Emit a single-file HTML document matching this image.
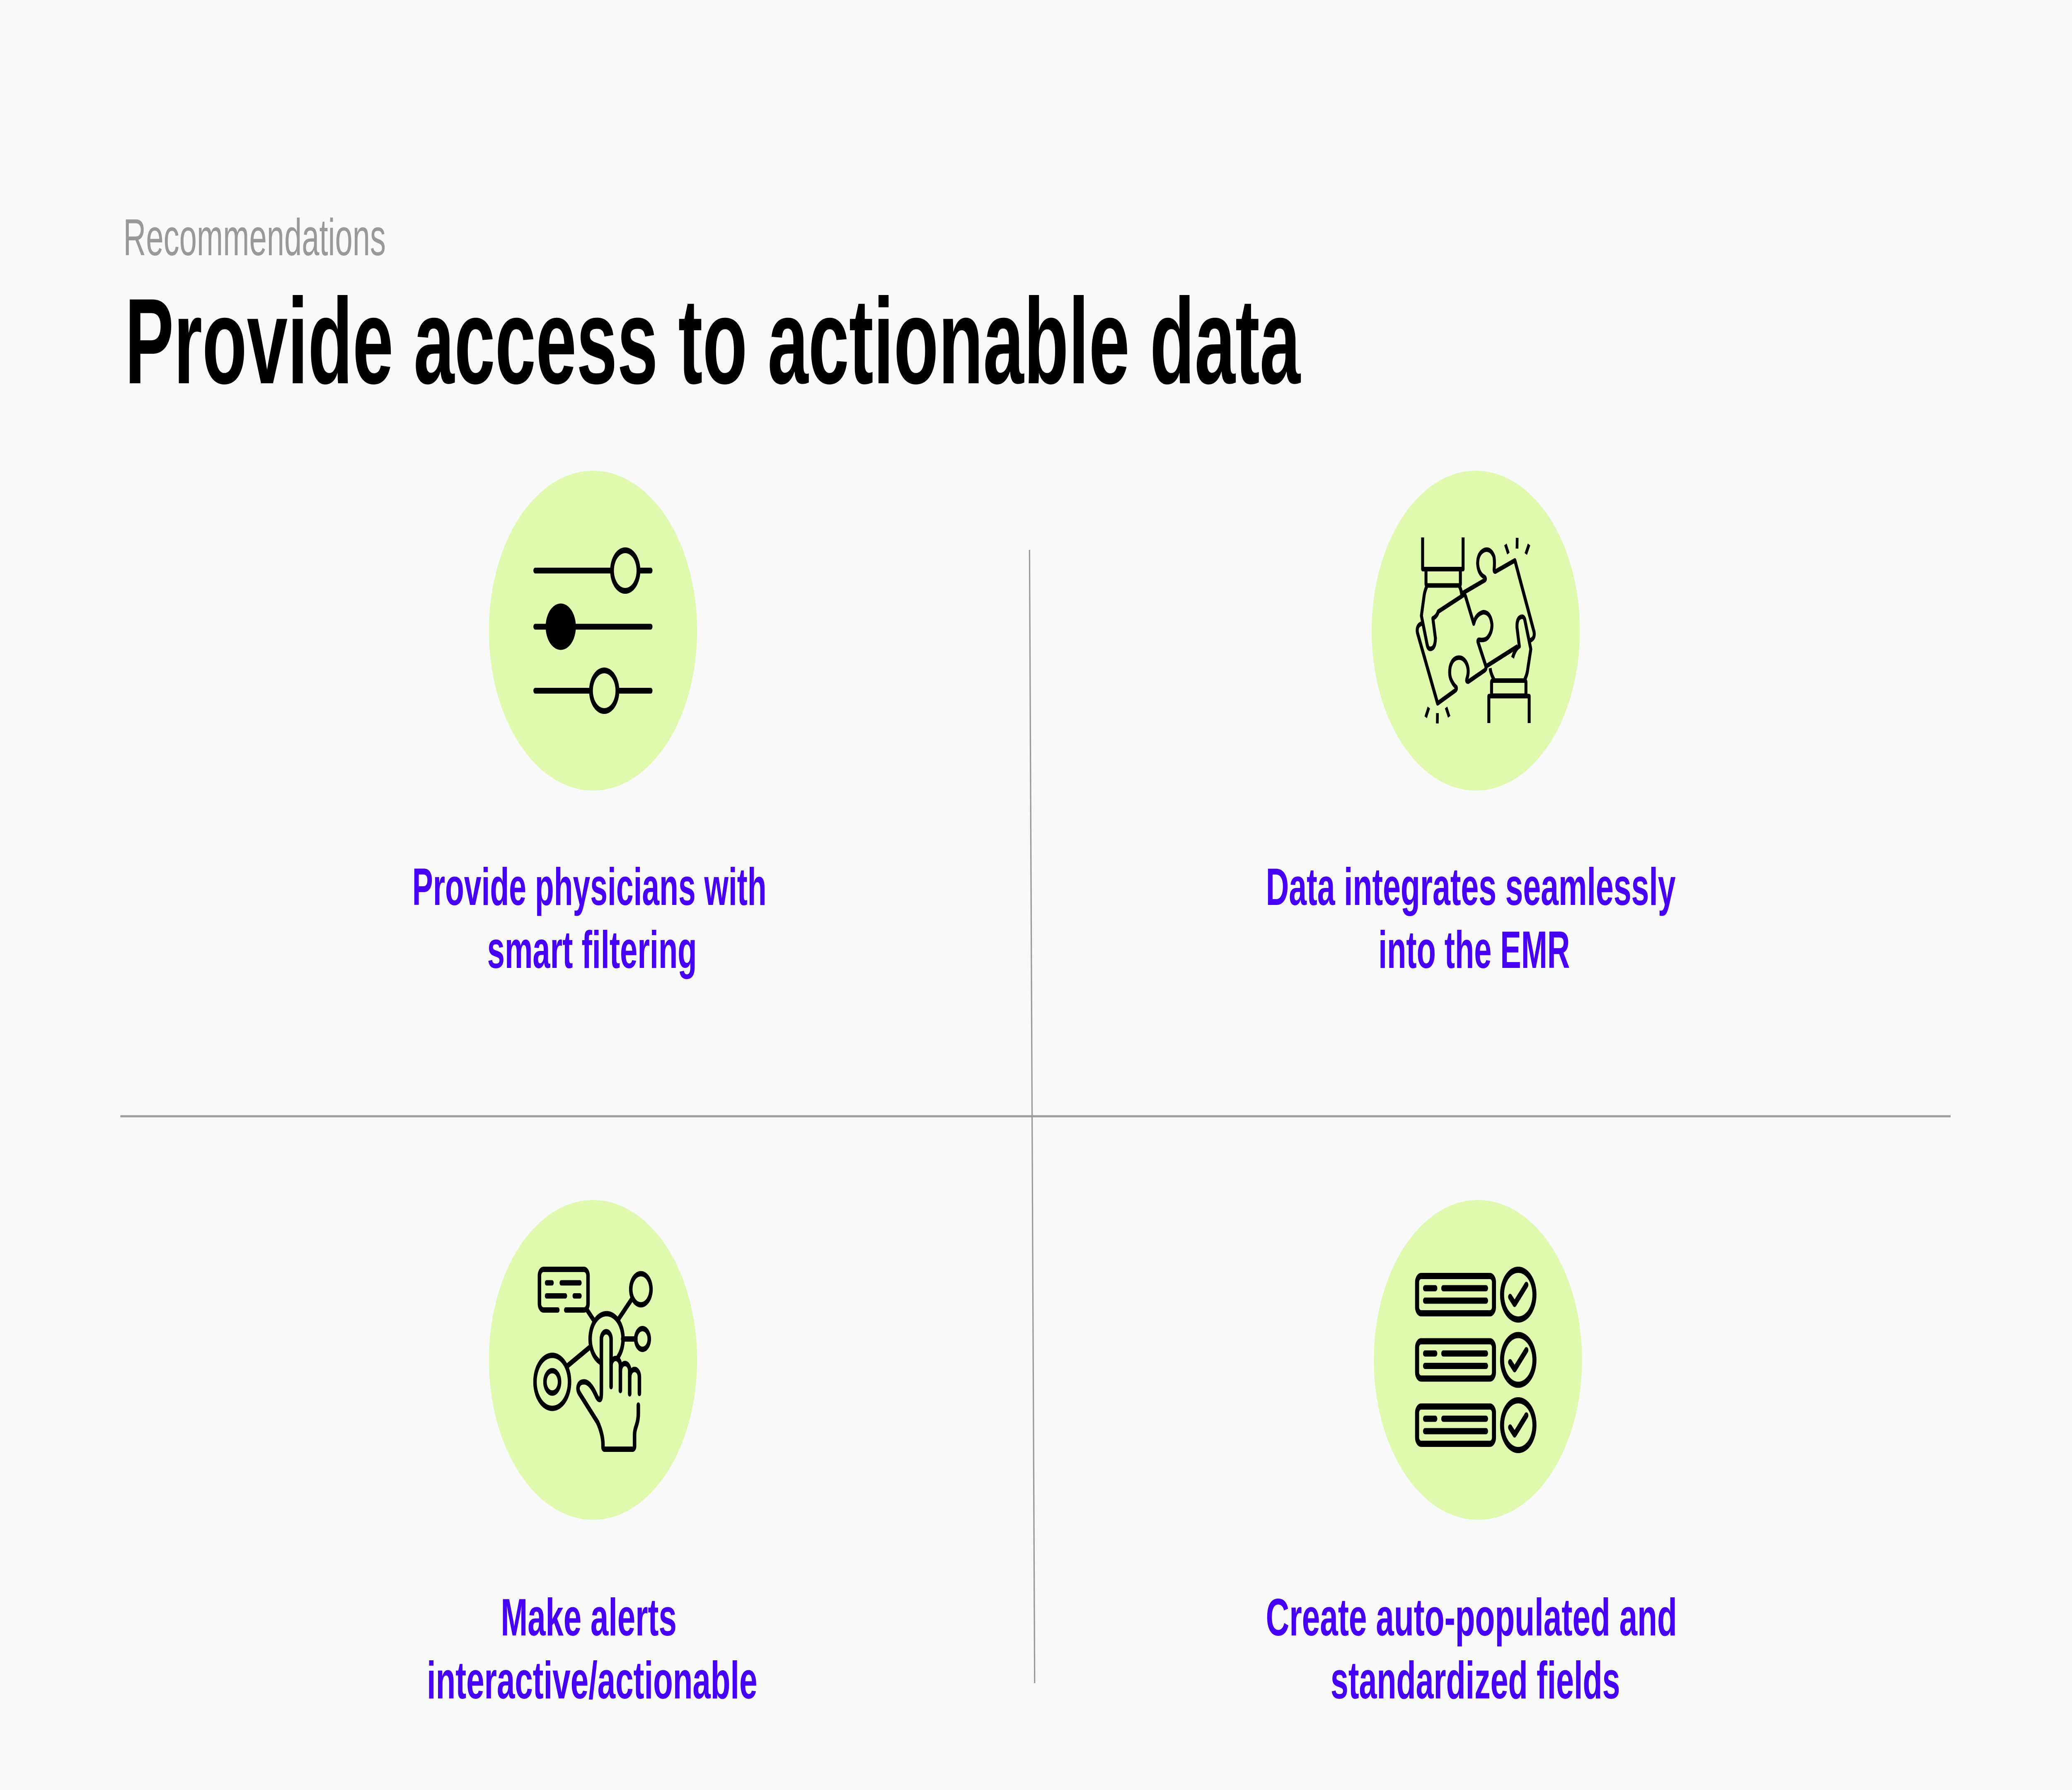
<!DOCTYPE html>
<html><head><meta charset="utf-8">
<style>
html,body{margin:0;padding:0;background:#f9f9f9;width:100%;height:100%;overflow:hidden;}
svg{display:block;width:100vw;height:100vh;}
text{font-family:"Liberation Sans",Arial,sans-serif;}
</style></head>
<body>
<svg viewBox="0 0 7680 4320" preserveAspectRatio="none" xmlns="http://www.w3.org/2000/svg">
<rect width="7680" height="4320" fill="#f9f9f9"/>

<text x="457" y="616" font-size="125" fill="#999999" textLength="973" lengthAdjust="spacingAndGlyphs">Recommendations</text>
<text x="463" y="925" font-size="294" font-weight="bold" fill="#000" textLength="4357" lengthAdjust="spacingAndGlyphs">Provide access to actionable data</text>

<line x1="3816" y1="1327" x2="3835" y2="4062" stroke="#9a9a9a" stroke-width="5"/>
<line x1="446" y1="2694" x2="7230" y2="2694" stroke="#9a9a9a" stroke-width="5"/>

<circle cx="2198" cy="1522" r="386" fill="#dffaae"/>
<circle cx="5470" cy="1522" r="386" fill="#dffaae"/>
<circle cx="2198" cy="3282" r="386" fill="#dffaae"/>
<circle cx="5478" cy="3282" r="386" fill="#dffaae"/>

<g transform="translate(1810,1130) scale(0.5)" fill="none" stroke="#000" stroke-width="28" stroke-linecap="round">
  <line x1="348" y1="494" x2="916" y2="494"/><line x1="1114" y1="494" x2="1203" y2="494"/>
  <circle cx="1015" cy="494" r="98"/>
  <line x1="348" y1="765" x2="1203" y2="765"/>
  <circle cx="537" cy="765" r="112" fill="#000" stroke="none"/>
  <line x1="348" y1="1074" x2="760" y2="1074"/><line x1="958" y1="1074" x2="1203" y2="1074"/>
  <circle cx="859" cy="1074" r="98"/>
</g>

<g transform="translate(5080,1130) scale(0.5)" fill="none" stroke="#000" stroke-width="22" stroke-linejoin="round">
  <path d="M386,334 V487 H686 V334"/>
  <rect x="411" y="487" width="255" height="79" rx="8"/>
  <path d="M420,566 q-15,20 -22,45 L377,712 L421,856 q8,20 30,15 q28,-5 30,-50 L462,725 q30,-10 40,-33 L690,612 q10,-3 15,8 L765,750 q15,-45 70,-55 q55,0 65,60 q0,40 -35,65 q-20,12 -60,8 q-12,0 -8,12 L855,955 q5,15 -12,22 L725,1030 q-18,2 -10,-15 q20,-40 -5,-75 q-25,-30 -65,-25 q-40,5 -55,45 q-10,40 10,65 q15,20 35,32 q5,8 -5,15 L497,1135 L348,795 q-10,-35 30,-45 l-3,-2"/>
  <path d="M655,566 q15,15 20,40 L848,540 q8,-8 -4,-15 q-45,-15 -50,-65 q0,-50 50,-65 q45,-10 70,30 q8,25 2,65 q0,12 12,8 L1070,445 L1212,790 q8,30 -25,40 l-5,2"/>
  <path d="M860,955 L1090,860"/>
  <path d="M915,1020 q-25,-30 -28,-55 M1143,1020 q15,-20 20,-40 L1188,873 L1143,730 q-10,-20 -35,-10 q-25,10 -22,50 L1103,860 q-30,10 -50,55"/>
  <rect x="897" y="1025" width="255" height="73" rx="8"/>
  <path d="M877,1230 V1100 H1176 V1230"/>
  <g stroke-width="20">
  <path d="M1000,368 L1022,412 M1087,336 L1086,388 M1175,368 L1151,414 M432,1155 L409,1202 M496,1182 L495,1232 M560,1155 L583,1200"/>
  </g>
</g>

<g transform="translate(1810,2890) scale(0.5)" fill="none" stroke="#000" stroke-width="26" stroke-linecap="round" stroke-linejoin="round">
  <path d="M515,543 H409 a30,30 0 0 1 -30,-30 V377 a30,30 0 0 1 30,-30 H709 a30,30 0 0 1 30,30 V513 a30,30 0 0 1 -30,30 H574"/>
  <path d="M432,412 H472 M541,412 H679 M432,475 H571 M637,475 H679"/>
  <path d="M732,543 L780,591"/>
  <path d="M834,797 A122,122 0 1 1 962,770"/>
  <path d="M962,590 L1062,492"/>
  <circle cx="1131" cy="443" r="75"/>
  <path d="M996,683 H1094"/>
  <circle cx="1143" cy="683" r="50"/>
  <path d="M754,722 L588,812"/>
  <circle cx="474" cy="890" r="128"/>
  <circle cx="474" cy="890" r="54"/>
  <path d="M910,913 V684 a36,36 0 0 0 -72,0 V940 q0,40 -15,35 q-12,0 -28,-25 q-42,-60 -85,-60 q-40,0 -45,28 q-2,12 8,25 L810,1085 q40,58 40,110 v10 a10,10 0 0 0 10,10 h210 a14,14 0 0 0 14,-14 v-55 q0,-20 12,-42 q16,-30 16,-62 v-40"/>
  <path d="M979,932 V806 a35,35 0 0 0 -69,0"/>
  <path d="M1048,948 V836 a34,34 0 0 0 -69,0"/>
  <path d="M1120,946 V866 a36,36 0 0 0 -72,0"/>
</g>

<g transform="translate(5090,2890) scale(0.5)" fill="none" stroke="#000" stroke-width="30" stroke-linecap="round" stroke-linejoin="round">
  <g>
    <rect x="325" y="379" width="570" height="180" rx="30"/>
    <path d="M384,438 H460 M519,438 H836 M384,498 H836"/>
    <circle cx="1075" cy="469" r="120"/>
    <path d="M1015,480 L1048,514 L1135,422"/>
  </g>
  <g transform="translate(0,315)">
    <rect x="325" y="379" width="570" height="180" rx="30"/>
    <path d="M384,438 H460 M519,438 H836 M384,498 H836"/>
    <circle cx="1075" cy="469" r="120"/>
    <path d="M1015,480 L1048,514 L1135,422"/>
  </g>
  <g transform="translate(0,630)">
    <rect x="325" y="379" width="570" height="180" rx="30"/>
    <path d="M384,438 H460 M519,438 H836 M384,498 H836"/>
    <circle cx="1075" cy="469" r="120"/>
    <path d="M1015,480 L1048,514 L1135,422"/>
  </g>
</g>

<g font-size="127" font-weight="bold" fill="#4600f5">
  <text x="1528" y="2184" textLength="1313" lengthAdjust="spacingAndGlyphs">Provide physicians with</text>
  <text x="1806" y="2336" textLength="777" lengthAdjust="spacingAndGlyphs">smart filtering</text>
  <text x="4692" y="2184" textLength="1519" lengthAdjust="spacingAndGlyphs">Data integrates seamlessly</text>
  <text x="5109" y="2336" textLength="710" lengthAdjust="spacingAndGlyphs">into the EMR</text>
  <text x="1856" y="3947" textLength="652" lengthAdjust="spacingAndGlyphs">Make alerts</text>
  <text x="1582" y="4099" textLength="1225" lengthAdjust="spacingAndGlyphs">interactive/actionable</text>
  <text x="4692" y="3947" textLength="1524" lengthAdjust="spacingAndGlyphs">Create auto-populated and</text>
  <text x="4932" y="4099" textLength="1073" lengthAdjust="spacingAndGlyphs">standardized fields</text>
</g>
</svg>
</body></html>
